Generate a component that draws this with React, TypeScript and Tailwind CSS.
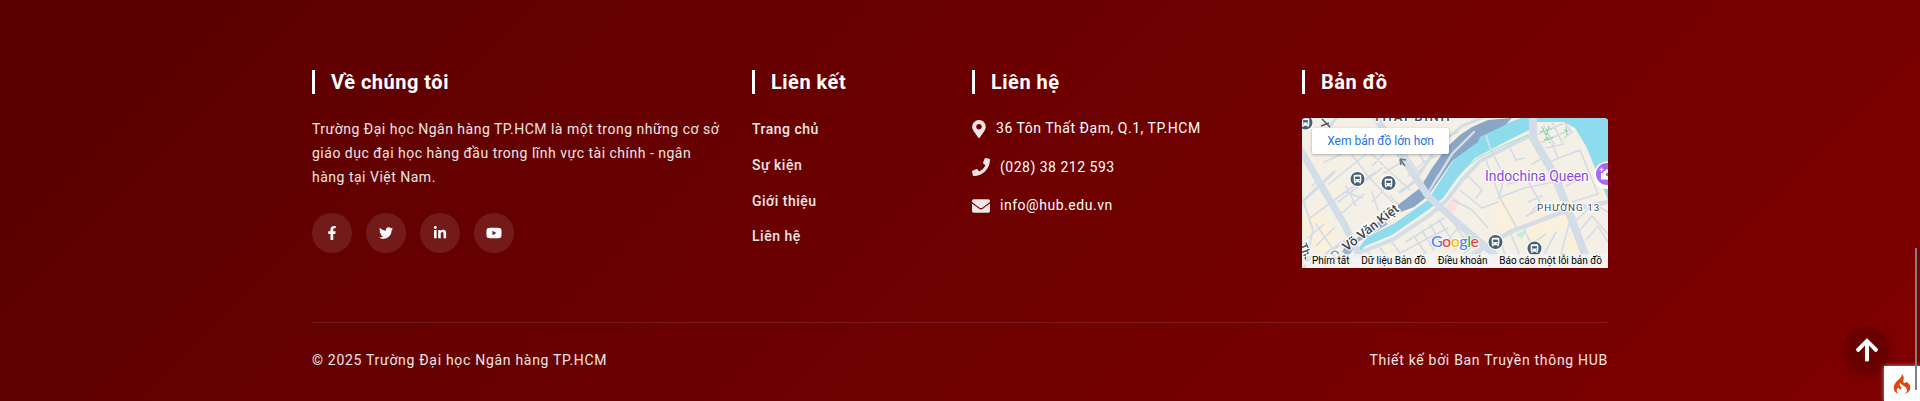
import type { ReactNode } from "react";
import { FaFacebookF, FaTwitter, FaLinkedinIn, FaYoutube, FaMapMarkerAlt, FaPhone, FaEnvelope, FaArrowUp } from "react-icons/fa";
import { SiCodeigniter } from "react-icons/si";

function Heading({ children }: { children: ReactNode }) {
  return (
    <h5 className="h-6 border-l-[3px] border-white pl-4 text-[20px] leading-6 font-bold tracking-[0.5px] text-white">
      {children}
    </h5>
  );
}

const socials = [
  { Icon: FaFacebookF, size: 14 },
  { Icon: FaTwitter, size: 14 },
  { Icon: FaLinkedinIn, size: 14 },
  { Icon: FaYoutube, size: 16 },
];
const links = ["Trang chủ", "Sự kiện", "Giới thiệu", "Liên hệ"];

function Station({ x, y }: { x: number; y: number }) {
  return (
    <g transform={`translate(${x} ${y})`}>
      <circle r="8" fill="#fff" />
      <circle r="7" fill="#486074" />
      <rect x="-3.8" y="-4.2" width="7.6" height="7.4" rx="1.2" fill="#fff" />
      <rect x="-2.4" y="-2.4" width="4.8" height="2.4" fill="#486074" />
      <path d="M-2.4 1.3h1M1.4 1.3h1" stroke="#486074" strokeWidth="1" />
      <path d="M-2.6 3v1.4M2.6 3v1.4" stroke="#fff" strokeWidth="1.2" />
    </g>
  );
}

function MapView() {
  return (
    <div className="relative mt-6 h-[150px] w-[306px] overflow-hidden rounded-t-[4px]">
      <svg viewBox="0 0 306 150" width="306" height="150" className="block" fontFamily="Roboto, sans-serif">
        <rect width="306" height="150" fill="#f5f0e5" />
        <path d="M190 88L205 76 216 108 196 116ZM222 96L262 88 270 108 228 130ZM262 122L280 112 290 140H268ZM0 96L20 92 34 120 20 140 0 110Z" fill="#fbf0dc" />
        <path d="M143 90L152 78 158 84 150 96Z" fill="#fbdfdf" />
        <path d="M214 117L225 111 220 121Z" fill="#bfeed4" />
        <path d="M235 -1H306V82L293 50 284 28 273 10 262 4 235 4Z" fill="#8edbed" />
        <path d="M51 138L65 119 93 105 126 82 158 32 180 17 203 6 227 -3V12L203 24 173 40 156 59 141 80 126 92 90 117 63 128 54 140Z" fill="#8edbed" />
        <path d="M96 95L96 87 118 70 130 50 145 29 158 17 170 9 186 2 210 0 203 7 178 19 176 24 151 42 126 78 112 89Z" fill="#8aa5c5" />
        <path d="M36 142L42 130 80 101 86 106 56 124 44 142Z" fill="#9bb1cc" />
        <g fill="none" stroke="#d3dce6" strokeLinecap="round" strokeWidth="1.6">
          <path d="M27 66L64 36M36 84L80 50M8 100L46 72 74 54M34 100L62 76M22 44L40 36M48 34L66 58 94 88M62 28L84 50 108 72M54 88L44 68M70 84L82 72M76 92L70 74M98 45l-16 10M106 58l16-14M102 34l14 20 8-8M112 26l10 18 12-6M18 60l-8 8M14 128l18-18M6 120l16-14M30 130l-16-24M60 80l-16-6M88 78l8 8M84 34l-14 14" />
          <path d="M104 124L142 100M100 134L146 110M112 118l12 18M120 112l12 20M128 106l10 18M137 102l14 22M90 124l10 14M78 130l8 10M66 134l8 8M146 96l22 34M158 108l-16 18M166 116l-14 16M174 124l-12 12M182 130l-8 10M196 116l8 24M208 114l10 24" />
          <path d="M151 82L170 92 186 110M158 72L180 90 196 84M166 58L180 72 174 80M184 42L198 80 216 112M190 34L202 58 198 76M208 30L214 42 222 40M206 66L230 60M224 60L238 84 226 98M196 80L222 70 262 62M230 46L244 38M252 42L278 32 296 76M264 68L284 58M270 84L296 76M224 98L248 86 262 96M226 84L240 78M250 26L256 40 248 44M244 30L262 26M272 104L292 86 306 94M278 112L290 98 306 116M284 122L296 108 306 124M240 140L254 114M258 140L268 102M226 128L244 116M236 138L222 112" />
          <path d="M242 8L252 26M250 4L260 24M236 16L260 6M240 24L268 12M262 4L270 14 262 20" />
        </g>
        <g fill="none" stroke="#d3dde7" strokeLinecap="round">
          <path d="M-2 31L23 74 42 106 58 138" strokeWidth="7" />
          <path d="M-2 86L32 54" strokeWidth="3" />
          <path d="M74 0L98 36 126 78 158 107 192 136" strokeWidth="7" />
          <path d="M34 0L24 14M0 12l6-8" strokeWidth="3" />
          <path d="M231 -2L231 20 252 56 270 102 288 150" strokeWidth="8" />
          <path d="M168 138L208 114 266 92 306 84" strokeWidth="4.5" />
          <path d="M62 133L92 121 128 97 145 82 160 62 178 43 205 29 229 17" strokeWidth="4" />
          <path d="M134 62L150 36 172 14M126 75L136 58" strokeWidth="2.4" />
          <path d="M98 74L112 64 136 28 160 8 184 -2" strokeWidth="3" />
        </g>
        <path d="M0 150L20 139 44 122" fill="none" stroke="#d3dde7" strokeWidth="3" />
        <path d="M184 17L189 33" stroke="#c6e3ea" strokeWidth="2" />
        <path d="M160 53L176 40 200 28 226 17M130 34L142 20 156 14" fill="none" stroke="#a9dfc1" strokeWidth="1" />
        <g fill="none" stroke="#7fd3a0" strokeWidth="1.1">
          <path d="M240 9l8 16M247 8l-3 12M238 14l12-3M242 22l10-3M262 12l5 2M264 9l1 8" strokeDasharray="4 1.5" />
        </g>
        <path d="M1 82l10 30-4 18" fill="none" stroke="#d3dde7" strokeWidth="2" />
        <g fill="#3f4650" stroke="#fff" strokeWidth="2.4" paintOrder="stroke" fontWeight="500">
          <text x="71" y="3.4" fontSize="13" letterSpacing="1.7">THÁI BÌNH</text>
          <text x="235" y="93" fontSize="9.8" letterSpacing="1.05" fontWeight="400">PHƯỜNG 13</text>
          <text transform="translate(33 143) rotate(-38)" fontSize="13">
            <tspan fill="#8a96a3">Đ.</tspan> Võ Văn Kiệt
          </text>
          <text transform="translate(-3 127) rotate(67)" fontSize="11">Thá</text>
        </g>
        <path d="M20 1l8 8M19 8l8-3" fill="none" stroke="#4d5966" strokeWidth="1.5" />
        <path d="M98 41l1 6M98 41l6 1M98 41l5 7" fill="none" stroke="#687b8d" strokeWidth="1.6" />
        <text x="183" y="63" fontSize="13.9" fill="#8a49d8" stroke="#fff" strokeWidth="2.4" paintOrder="stroke">Indochina Queen</text>
        <path d="M292 62Q296 71 306 71V60Z" fill="#fff" />
        <circle cx="305" cy="56" r="12.6" fill="#fff" />
        <circle cx="305" cy="56" r="11" fill="#aa68f3" />
        <path d="M299 55h2.5v-2h1.5l1-1.500h4v10h-9z" fill="#fff" />
        <path d="M299.500 49.500v4M297.500 51.500h4" stroke="#fff" strokeWidth="1.2" />
        <circle cx="305.500" cy="56.500" r="1.800" fill="#aa68f3" />
        <Station x={3.5} y={4.5} />
        <Station x={55.5} y={61} />
        <Station x={86.5} y={65} />
        <Station x={193.5} y={124} />
        <Station x={232.5} y={130.500} />
        <g fontFamily="Lato, sans-serif" fontSize="16" fontWeight="500" stroke="#fff" strokeWidth="1.5" paintOrder="stroke">
          <text x="129" y="128.500" textLength="48">
            <tspan fill="#4285f4">G</tspan><tspan fill="#ea4335">o</tspan><tspan fill="#fbbc04">o</tspan><tspan fill="#4285f4">g</tspan><tspan fill="#34a853">l</tspan><tspan fill="#ea4335">e</tspan>
          </text>
        </g>
      </svg>
      <div className="absolute top-[10px] left-[10px] flex h-[26px] w-[137px] items-center justify-center rounded-[2px] bg-white text-[12px] text-[#1a73e8] shadow-[0_1px_3px_rgba(0,0,0,0.3)]">
        Xem bản đồ lớn hơn
      </div>
      <div className="absolute right-0 bottom-0 flex h-[14px] w-[302px] items-center justify-between bg-[#f5f5f5]/80 pr-[6px] pl-[6px] text-[10px] leading-[14px] whitespace-nowrap text-black">
        <span>Phím tắt</span>
        <span>Dữ liệu Bản đồ</span>
        <span>Điều khoản</span>
        <span>Báo cáo một lỗi bản đồ</span>
      </div>
    </div>
  );
}

export default function App() {
  return (
    <div className="relative h-[401px] w-full overflow-hidden bg-linear-135 from-[#5a0000] to-[#800000] font-[Roboto,sans-serif] text-[14px] tracking-[0.5px] text-white">
      <footer className="mx-auto w-[1296px] pt-[70px]">
        <div className="flex h-[252px] gap-6">
          <section className="w-[416px]">
            <Heading>Về chúng tôi</Heading>
            <p className="mt-[23px] leading-6 whitespace-nowrap text-white/90">
              Trường Đại học Ngân hàng TP.HCM là một trong những cơ sở
              <br />
              giáo dục đại học hàng đầu trong lĩnh vực tài chính - ngân
              <br />
              hàng tại Việt Nam.
            </p>
            <div className="mt-6 flex gap-[14px]">
              {socials.map(({ Icon, size }, i) => (
                <a key={i} className="flex size-10 items-center justify-center rounded-full bg-white/10">
                  <Icon size={size} />
                </a>
              ))}
            </div>
          </section>
          <section className="w-[196px]">
            <Heading>Liên kết</Heading>
            <ul className="mt-[23px] flex flex-col gap-[11.8px] leading-6 font-medium text-white/90">
              {links.map((l) => (
                <li key={l}>{l}</li>
              ))}
            </ul>
          </section>
          <section className="w-[306px]">
            <Heading>Liên hệ</Heading>
            <ul className="mt-[22px] flex flex-col gap-[14.5px] leading-6">
              <li className="flex items-center gap-[10px] tracking-[0.53px]">
                <FaMapMarkerAlt className="mt-[2px] h-[18px] w-[14px] text-white/90" />
                36 Tôn Thất Đạm, Q.1, TP.HCM
              </li>
              <li className="flex items-center gap-[10px]">
                <FaPhone size={18} className="text-white/90" />
                (028) 38 212 593
              </li>
              <li className="flex items-center gap-[10px] tracking-[0.53px]">
                <FaEnvelope size={18} className="mt-[2px] text-white/90" />
                info@hub.edu.vn
              </li>
            </ul>
          </section>
          <section className="w-[306px] tracking-normal">
            <Heading>Bản đồ</Heading>
            <MapView />
          </section>
        </div>
        <div className="flex justify-between border-t border-white/10 pt-[25px] leading-6 tracking-[0.7px] text-white/90">
          <p>© 2025 Trường Đại học Ngân hàng TP.HCM</p>
          <p>Thiết kế bởi Ban Truyền thông HUB</p>
        </div>
      </footer>
      <button className="absolute top-[327px] left-[1845px] flex size-11 items-center justify-center rounded-full bg-[#680000] pt-[2px] shadow-[0_4px_12px_rgba(0,0,0,0.2)]">
        <FaArrowUp size={26} />
      </button>
      <div className="absolute top-[366px] left-[1884px] flex h-[35px] w-9 items-center justify-center bg-white shadow-[0_0_4px_rgba(255,255,255,0.6)]">
        <SiCodeigniter size={20} className="text-[#dd4814]" />
      </div>
      <div className="absolute top-[248px] left-[1915px] h-[142px] w-[2px] bg-[#808080]" />
    </div>
  );
}
